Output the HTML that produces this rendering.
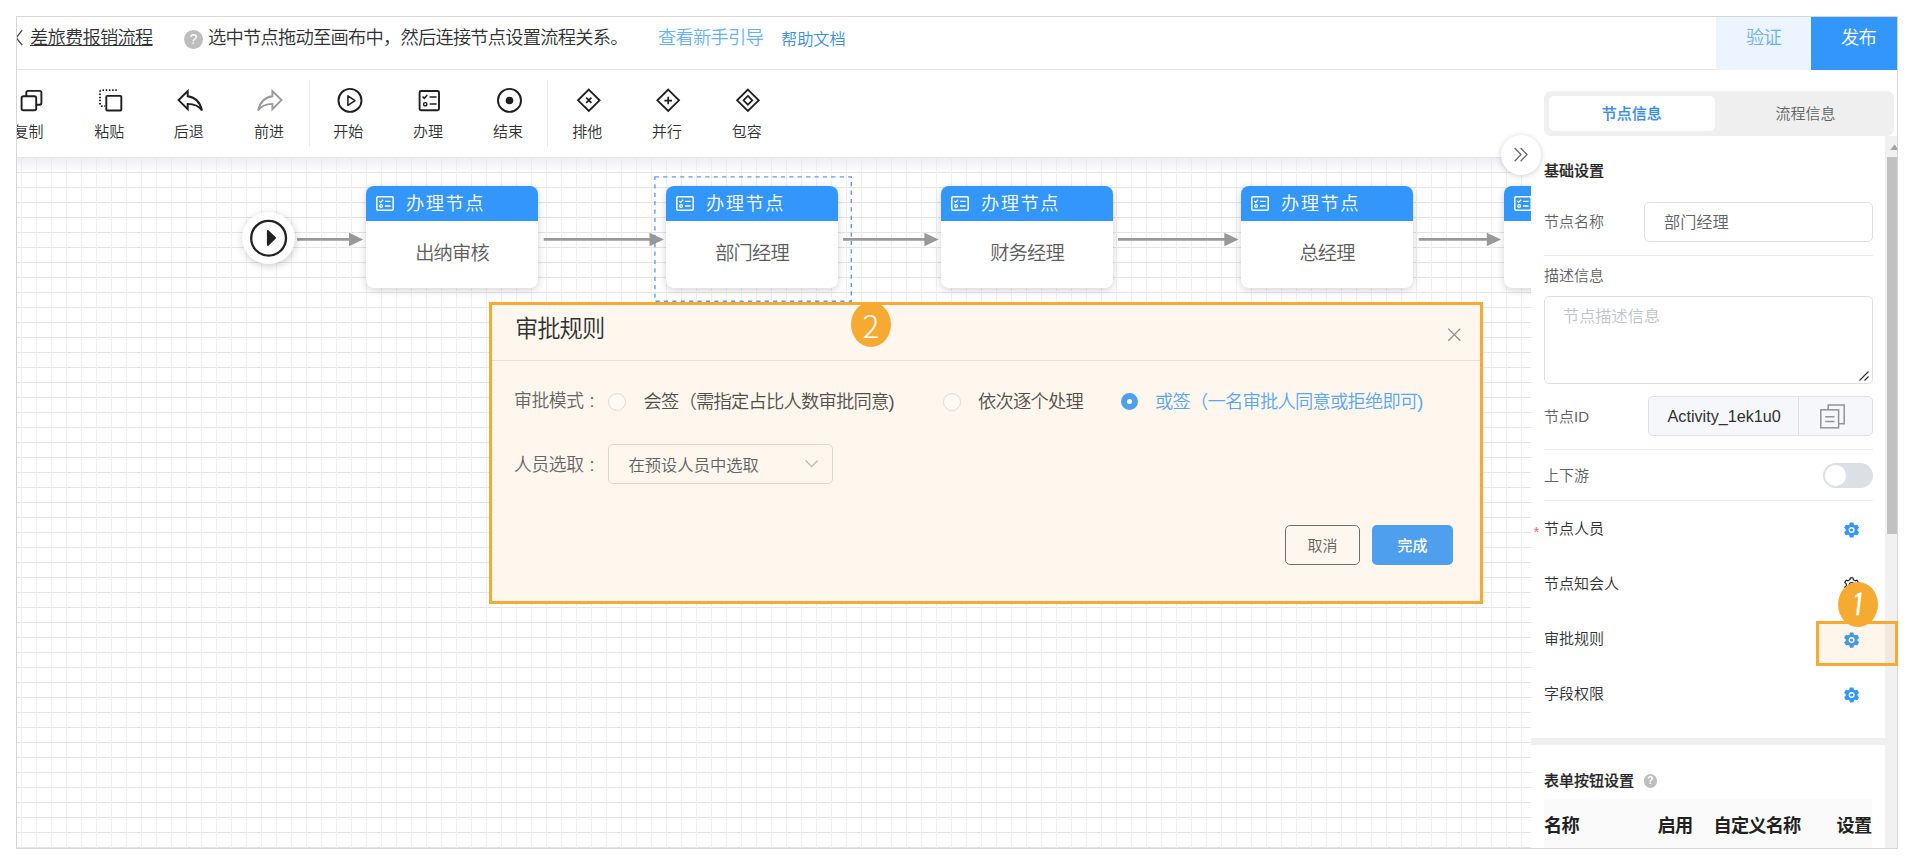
<!DOCTYPE html>
<html lang="zh-CN">
<head>
<meta charset="utf-8">
<title>差旅费报销流程</title>
<style>
*{box-sizing:border-box;margin:0;padding:0}
html,body{width:1913px;height:866px;overflow:hidden;background:#fff}
body{font-family:"Liberation Sans","Noto Sans CJK SC",sans-serif;color:#333;font-weight:350;position:relative}
.abs{position:absolute}
#frame{position:absolute;left:16px;top:16px;width:1882px;height:833px;border:1px solid #d6d6d6;overflow:hidden;background:#fff}
/* everything inside #inner is positioned in PAGE coordinates */
#inner{position:absolute;left:-17px;top:-17px;width:1913px;height:866px}
.t{position:absolute;white-space:nowrap;line-height:1}
/* header */
#hdr{left:17px;top:17px;width:1880px;height:52px;background:#fff;border-bottom:1px solid #e6e6e6;height:53px}
/* toolbar */
#tb{left:17px;top:70px;width:1514px;height:87px;background:#fff}
.tbi{position:absolute;top:70px;width:80px;height:87px;text-align:center}
.tbi svg{position:absolute;left:50%;top:18px;width:24px;height:24px;margin-left:-12px;overflow:visible}
.tbi span{position:absolute;left:0;width:100%;top:54px;font-size:15.0px;line-height:15px;color:#333}
.sep{position:absolute;top:80px;width:1px;height:67px;background:#ebebeb}
/* canvas */
#cv{left:17px;top:157px;width:1514px;height:692px;background-color:#fff;
 background-image:linear-gradient(to right,#efeff0 1px,transparent 1px),linear-gradient(to bottom,#e4e4e6 1px,transparent 1px);
 background-size:15px 15px;background-position:4px 0}
#cvsh{left:17px;top:157px;width:1514px;height:16px;background:linear-gradient(to bottom,rgba(225,225,235,.6),rgba(235,235,242,0))}
/* nodes */
.node{position:absolute;top:186px;width:172px;height:102px;border-radius:8px;background:#fff;box-shadow:0 2px 8px rgba(0,0,0,.18);overflow:hidden}
.node .nh{position:absolute;left:0;top:0;width:100%;height:35px;background:#3296fa}
.node .nh svg{position:absolute;left:10px;top:9.5px;width:18px;height:15px}
.node .nh span{position:absolute;left:40px;top:9px;font-size:18.3px;line-height:18px;color:#fff;letter-spacing:1.5px;white-space:nowrap}
.node .nb{position:absolute;left:0;top:35px;width:100%;height:67px;text-align:center;font-size:19.23px;letter-spacing:-0.83px;line-height:66px;color:#5c5c5c}
/* right panel */
#rp{left:1531px;top:70px;width:366px;height:779px;background:#fff}
.lbl{font-size:15.0px;color:#606266}
.lbl2{font-size:15.0px;color:#303133}
.hr{position:absolute;left:1544px;width:329px;height:1px;background:#ebebeb}
/* dialog */
#dlg{left:489px;top:302px;width:994px;height:302px;border:3px solid #f6aa31;background:#fff7ed}
.dl{font-size:17.8px;letter-spacing:-0.4px;line-height:22px;color:#666}
.dl .col{position:absolute;left:75.5px;top:0}
.dv{font-size:18.29px;letter-spacing:-0.79px;line-height:22px;color:#534f4b}
.rad{width:18px;height:18px;border-radius:50%;border:1px solid #dedbd8;background:#fff9f2}
.rad.on{border:6px solid #4e9fee;background:#fff;width:17.6px;height:17.6px}
.num{position:absolute;width:40px;height:45px;border-radius:50%;background:#f6aa31;color:#fff;text-align:center;font-size:31.5px;line-height:45px;font-weight:300;font-family:"Noto Sans CJK SC","Liberation Sans",sans-serif}
</style>
</head>
<body>
<div id="frame"><div id="inner">

<!-- HEADER -->
<div id="hdr" class="abs"></div>
<svg class="abs" style="left:13.4px;top:29px;width:12px;height:18px" viewBox="0 0 12 18"><path d="M9.2 1.2 L3.2 8.7 L9.2 16.2" fill="none" stroke="#444" stroke-width="1.3"/></svg>
<div class="t" style="left:30px;top:27px;font-size:18.29px;letter-spacing:-0.79px;line-height:22px;color:#303133;text-decoration:underline;text-underline-offset:1.2px;text-decoration-thickness:1.3px">差旅费报销流程</div>
<div class="abs" style="left:184px;top:29.5px;width:19px;height:19px;border-radius:50%;background:#bdbdbd;color:#fff;font-size:14.0px;line-height:19px;text-align:center;font-family:'Liberation Sans',sans-serif">?</div>
<div class="t" style="left:208px;top:27px;font-size:18.29px;letter-spacing:-0.79px;line-height:22px;color:#303133">选中节点拖动至画布中，然后连接节点设置流程关系。</div>
<div class="t" style="left:658px;top:27px;font-size:18.29px;letter-spacing:-0.79px;line-height:22px;color:#66b1ff">查看新手引导</div>
<div class="t" style="left:781px;top:28px;font-size:16.2px;line-height:22px;color:#3a8ee6">帮助文档</div>
<div class="abs" style="left:1716px;top:17px;width:95px;height:53px;background:#ecf5ff;color:#6cb0f8;font-size:18.29px;letter-spacing:-0.79px;line-height:42px;text-align:center">验证</div>
<div class="abs" style="left:1811px;top:17px;width:95px;height:53px;background:#3296fa;color:#fff;font-size:18.29px;letter-spacing:-0.79px;line-height:42px;text-align:center">发布</div>

<!-- TOOLBAR -->
<div id="tb" class="abs"></div>
<div class="t" style="left:-11.5px;top:122px;width:80px;text-align:center;font-size:15.0px;line-height:20px;color:#303133">复制</div>
<div class="t" style="left:69.3px;top:122px;width:80px;text-align:center;font-size:15.0px;line-height:20px;color:#303133">粘贴</div>
<div class="t" style="left:148.8px;top:122px;width:80px;text-align:center;font-size:15.0px;line-height:20px;color:#303133">后退</div>
<div class="t" style="left:229.0px;top:122px;width:80px;text-align:center;font-size:15.0px;line-height:20px;color:#303133">前进</div>
<div class="t" style="left:308.3px;top:122px;width:80px;text-align:center;font-size:15.0px;line-height:20px;color:#303133">开始</div>
<div class="t" style="left:388.0px;top:122px;width:80px;text-align:center;font-size:15.0px;line-height:20px;color:#303133">办理</div>
<div class="t" style="left:468.0px;top:122px;width:80px;text-align:center;font-size:15.0px;line-height:20px;color:#303133">结束</div>
<div class="t" style="left:547.2px;top:122px;width:80px;text-align:center;font-size:15.0px;line-height:20px;color:#303133">排他</div>
<div class="t" style="left:626.8px;top:122px;width:80px;text-align:center;font-size:15.0px;line-height:20px;color:#303133">并行</div>
<div class="t" style="left:706.7px;top:122px;width:80px;text-align:center;font-size:15.0px;line-height:20px;color:#303133">包容</div>
<div class="sep" style="left:309px"></div><div class="sep" style="left:547px"></div>
<svg class="abs" style="left:0;top:70px;width:800px;height:87px;overflow:visible" viewBox="0 70 800 87" fill="none" stroke="#1f1f1f" stroke-width="1.9">
<!-- copy -->
<rect x="21.6" y="96.3" width="14.6" height="14" rx="1.8"/>
<path d="M26.3 96 V92.6 a1.7 1.7 0 0 1 1.7 -1.7 H39.7 a1.7 1.7 0 0 1 1.7 1.7 V103 a1.7 1.7 0 0 1 -1.7 1.7 H36.6"/>
<!-- paste -->
<path d="M116.8 90.1 H101.6 a1.6 1.6 0 0 0 -1.6 1.6 V104.5 a1.6 1.6 0 0 0 1.6 1.6 H105" stroke-dasharray="1.5 1.7"/>
<rect x="106.3" y="95.9" width="15" height="14.6" rx="0.8"/>
<!-- undo -->
<g transform="translate(174.7 84.5) scale(1.3)" stroke-width="1.5" stroke-linejoin="miter"><path d="M10 9V5l-7 7 7 7v-4.1c5 0 8.5 1.6 11 5.1-1-5-4-10-11-11z"/></g>
<!-- redo -->
<g transform="translate(285.4 84.5) scale(-1.3 1.3)" stroke-width="1.45" stroke="#9a9a9a"><path d="M10 9V5l-7 7 7 7v-4.1c5 0 8.5 1.6 11 5.1-1-5-4-10-11-11z"/></g>
<!-- start -->
<circle cx="350" cy="100.4" r="11.5"/>
<path d="M347.9 95.8 L355 100.6 L347.9 105.4 Z" stroke-width="1.5" stroke-linejoin="round"/>
<!-- task -->
<rect x="419.6" y="91" width="19.4" height="19.2" rx="1.5"/>
<path d="M422.6 96.6 l1.7 1.7 l3 -3.2 M429.6 97 h7 M429.6 104 h7" stroke-width="1.5"/>
<circle cx="425.2" cy="104.3" r="1.7" stroke-width="1.4"/>
<!-- end -->
<circle cx="509.5" cy="100.4" r="11.5"/>
<circle cx="509.5" cy="100.5" r="3.8" fill="#1f1f1f" stroke="none"/>
<!-- exclusive -->
<path d="M588.8 89.6 L599.6 100.3 L588.8 111 L578 100.3 Z" stroke-width="1.85"/>
<path d="M586.2 97.7 l5.2 5.2 M591.4 97.7 l-5.2 5.2" stroke-width="1.75"/>
<!-- parallel -->
<path d="M668.2 89.6 L679 100.3 L668.2 111 L657.4 100.3 Z" stroke-width="1.85"/>
<path d="M664.4 100.5 h7.6 M668.2 96.7 v7.6" stroke-width="1.75"/>
<!-- inclusive -->
<path d="M747.9 89.6 L758.7 100.3 L747.9 111 L737.1 100.3 Z" stroke-width="1.85"/>
<path d="M747.9 95.9 L752.3 100.3 L747.9 104.7 L743.5 100.3 Z" stroke-width="1.7"/>
</svg>

<!-- CANVAS -->
<div id="cv" class="abs"></div>
<div id="cvsh" class="abs"></div>
<div class="abs" style="left:17px;top:157px;width:1514px;height:692px;overflow:hidden"><div class="abs" style="left:-17px;top:-157px;width:1913px;height:866px">
<svg class="abs" style="left:0;top:0;width:1913px;height:866px" viewBox="0 0 1913 866">
<path d="M297 239.4 H350.2" stroke="#999" stroke-width="2.6" fill="none"/><path d="M349.0 232.7 L363.2 239.5 L349.0 246.3 Z" fill="#999"/>
<path d="M543.7 239.4 H650.7" stroke="#999" stroke-width="2.6" fill="none"/><path d="M649.5 232.7 L663.7 239.5 L649.5 246.3 Z" fill="#999"/>
<path d="M843 239.4 H925.6" stroke="#999" stroke-width="2.6" fill="none"/><path d="M924.4 232.7 L938.6 239.5 L924.4 246.3 Z" fill="#999"/>
<path d="M1118 239.4 H1225.5" stroke="#999" stroke-width="2.6" fill="none"/><path d="M1224.3 232.7 L1238.5 239.5 L1224.3 246.3 Z" fill="#999"/>
<path d="M1418.7 239.4 H1488" stroke="#999" stroke-width="2.6" fill="none"/><path d="M1486.8 232.7 L1501 239.5 L1486.8 246.3 Z" fill="#999"/>
</svg>
<div class="abs" style="left:242.3px;top:212px;width:52.4px;height:52.4px;border-radius:50%;background:#fff;box-shadow:1px 2px 8px rgba(0,0,0,.2)"></div>
<svg class="abs" style="left:248px;top:218px;width:42px;height:42px" viewBox="248 218 42 42"><circle cx="268.6" cy="238.2" r="17.4" fill="none" stroke="#222" stroke-width="2.3"/><path d="M267.8 230.8 L275.2 237.9 L267.8 245 Z" fill="#222" stroke="#222" stroke-width="1.8" stroke-linejoin="round"/></svg>
<div class="node" style="left:366px"><div class="nh"><svg viewBox="0 0 18 15" fill="none" stroke="#fff" stroke-width="1.5"><rect x="0.8" y="0.8" width="16.4" height="13.4" rx="1.2"/><path d="M3.3 5 l1.4 1.4 l2.4 -2.6 M9 5.3 h5.6 M9 10 h5.6" stroke-width="1.3"/><circle cx="5.1" cy="10" r="1.4" stroke-width="1.2"/></svg><span>办理节点</span></div><div class="nb">出纳审核</div></div>
<div class="node" style="left:666px"><div class="nh"><svg viewBox="0 0 18 15" fill="none" stroke="#fff" stroke-width="1.5"><rect x="0.8" y="0.8" width="16.4" height="13.4" rx="1.2"/><path d="M3.3 5 l1.4 1.4 l2.4 -2.6 M9 5.3 h5.6 M9 10 h5.6" stroke-width="1.3"/><circle cx="5.1" cy="10" r="1.4" stroke-width="1.2"/></svg><span>办理节点</span></div><div class="nb">部门经理</div></div>
<div class="node" style="left:941px"><div class="nh"><svg viewBox="0 0 18 15" fill="none" stroke="#fff" stroke-width="1.5"><rect x="0.8" y="0.8" width="16.4" height="13.4" rx="1.2"/><path d="M3.3 5 l1.4 1.4 l2.4 -2.6 M9 5.3 h5.6 M9 10 h5.6" stroke-width="1.3"/><circle cx="5.1" cy="10" r="1.4" stroke-width="1.2"/></svg><span>办理节点</span></div><div class="nb">财务经理</div></div>
<div class="node" style="left:1241px"><div class="nh"><svg viewBox="0 0 18 15" fill="none" stroke="#fff" stroke-width="1.5"><rect x="0.8" y="0.8" width="16.4" height="13.4" rx="1.2"/><path d="M3.3 5 l1.4 1.4 l2.4 -2.6 M9 5.3 h5.6 M9 10 h5.6" stroke-width="1.3"/><circle cx="5.1" cy="10" r="1.4" stroke-width="1.2"/></svg><span>办理节点</span></div><div class="nb">总经理</div></div>
<div class="node" style="left:1503.5px"><div class="nh"><svg viewBox="0 0 18 15" fill="none" stroke="#fff" stroke-width="1.5"><rect x="0.8" y="0.8" width="16.4" height="13.4" rx="1.2"/><path d="M3.3 5 l1.4 1.4 l2.4 -2.6 M9 5.3 h5.6 M9 10 h5.6" stroke-width="1.3"/><circle cx="5.1" cy="10" r="1.4" stroke-width="1.2"/></svg><span>办理节点</span></div><div class="nb">董事长</div></div>
<svg class="abs" style="left:650px;top:172px;width:210px;height:135px" viewBox="650 172 210 135"><rect x="654.9" y="176.9" width="196.4" height="124.4" fill="none" stroke="#5b9cf7" stroke-width="1.4" stroke-dasharray="4.2 4.2"/></svg>
</div></div>

<!-- RIGHT PANEL -->
<div id="rp" class="abs"></div>
<div class="abs" style="left:1544px;top:91px;width:350px;height:45px;border-radius:7px;background:#efefef"></div>
<div class="abs" style="left:1548.5px;top:96px;width:166.5px;height:35px;border-radius:5px;background:#fff"></div>
<div class="t" style="left:1548.5px;top:104px;width:166.5px;text-align:center;font-size:15.0px;line-height:20px;color:#3a8ee6;font-weight:500;-webkit-text-stroke:0.2px #3a8ee6">节点信息</div>
<div class="t" style="left:1722px;top:104px;width:167px;text-align:center;font-size:15.0px;line-height:20px;color:#606266">流程信息</div>
<div class="abs" style="left:1885px;top:136px;width:12px;height:713px;background:#f1f1f1"></div>
<div class="abs" style="left:1887px;top:157px;width:10px;height:377px;background:#c1c1c1"></div>
<svg class="abs" style="left:1885px;top:141px;width:12px;height:12px" viewBox="0 0 12 12"><path d="M5.2 9 L9.6 3.6 L14 9 Z" fill="#a3a3a3"/></svg>
<div class="t" style="left:1544px;top:161px;font-size:15.0px;line-height:20px;color:#262626;font-weight:500;-webkit-text-stroke:0.2px #262626">基础设置</div>
<div class="t lbl" style="left:1544px;top:212px;line-height:20px">节点名称</div>
<div class="abs" style="left:1644px;top:202px;width:229px;height:40px;border:1px solid #dcdfe6;border-radius:5px;background:#fff"></div>
<div class="t" style="left:1664px;top:212px;font-size:16.2px;line-height:20px;color:#606266">部门经理</div>
<div class="hr" style="top:255px"></div>
<div class="t lbl" style="left:1544px;top:266px;line-height:20px">描述信息</div>
<div class="abs" style="left:1544px;top:296px;width:329px;height:88px;border:1px solid #dcdfe6;border-radius:5px;background:#fff"></div>
<div class="t" style="left:1563px;top:306px;font-size:16.2px;line-height:20px;color:#c0c4cc">节点描述信息</div>
<svg class="abs" style="left:1857px;top:369px;width:14px;height:14px" viewBox="0 0 14 14" stroke="#333" stroke-width="1.2" fill="none"><path d="M2.5 11.5 L11.5 2.5 M7.5 11.5 L11.5 7.5"/></svg>
<div class="t lbl" style="left:1544px;top:407px;line-height:20px">节点ID</div>
<div class="abs" style="left:1648px;top:396px;width:225px;height:40px;border:1px solid #dcdfe6;border-radius:5px;background:#f5f7fa"></div>
<div class="abs" style="left:1798px;top:397px;width:1px;height:38px;background:#dcdfe6"></div>
<div class="t" style="left:1667.5px;top:406px;font-size:16.2px;line-height:20px;color:#303133">Activity_1ek1u0</div>
<svg class="abs" style="left:1816px;top:400px;width:34px;height:34px" viewBox="1816 400 34 34" fill="none" stroke="#909399" stroke-width="1.5"><rect x="1820.8" y="409.8" width="17.8" height="18"/><path d="M1828.2 409.5 V404.9 H1844.2 V423.8 H1839"/><path d="M1825.2 416.7 h9.3 M1825.2 421.4 h9.3"/></svg>
<div class="hr" style="top:449px"></div>
<div class="t lbl" style="left:1544px;top:466px;line-height:20px">上下游</div>
<div class="abs" style="left:1823px;top:463px;width:50px;height:25px;border-radius:13px;background:#dcdfe6"></div>
<div class="abs" style="left:1825px;top:465px;width:20.5px;height:20.5px;border-radius:50%;background:#fff"></div>
<div class="hr" style="top:500px"></div>
<div class="t" style="left:1533.5px;top:522px;font-size:15.0px;line-height:20px;color:#f56c6c">*</div>
<div class="t lbl2" style="left:1544px;top:519px;line-height:20px">节点人员</div>
<div class="t lbl2" style="left:1544px;top:574px;line-height:20px">节点知会人</div>
<div class="t lbl2" style="left:1544px;top:629px;line-height:20px">审批规则</div>
<div class="t lbl2" style="left:1544px;top:684px;line-height:20px">字段权限</div>
<svg class="abs" style="left:1836px;top:515px;width:30px;height:200px" viewBox="1836 515 30 200"><path d="M1853.36 524.89 L1852.97 522.93 L1850.23 522.93 L1849.84 524.89 L1848.06 525.92 L1846.17 525.28 L1844.79 527.66 L1846.30 528.97 L1846.30 531.03 L1844.79 532.34 L1846.17 534.72 L1848.06 534.08 L1849.84 535.11 L1850.23 537.07 L1852.97 537.07 L1853.36 535.11 L1855.14 534.08 L1857.03 534.72 L1858.41 532.34 L1856.90 531.03 L1856.90 528.97 L1858.41 527.66 L1857.03 525.28 L1855.14 525.92 Z" fill="#3296fa" stroke="#3296fa" stroke-width="1.1" stroke-linejoin="round"/><circle cx="1851.6" cy="530" r="3" fill="#fff"/><circle cx="1851.6" cy="530" r="1.6" fill="#3296fa"/><path d="M1853.36 579.79 L1852.97 577.83 L1850.23 577.83 L1849.84 579.79 L1848.06 580.82 L1846.17 580.18 L1844.79 582.56 L1846.30 583.87 L1846.30 585.93 L1844.79 587.24 L1846.17 589.62 L1848.06 588.98 L1849.84 590.01 L1850.23 591.97 L1852.97 591.97 L1853.36 590.01 L1855.14 588.98 L1857.03 589.62 L1858.41 587.24 L1856.90 585.93 L1856.90 583.87 L1858.41 582.56 L1857.03 580.18 L1855.14 580.82 Z" fill="none" stroke="#222" stroke-width="1.2" stroke-linejoin="round"/><circle cx="1851.6" cy="584.9" r="2.4" fill="none" stroke="#222" stroke-width="1.2"/><path d="M1853.36 689.89 L1852.97 687.93 L1850.23 687.93 L1849.84 689.89 L1848.06 690.92 L1846.17 690.28 L1844.79 692.66 L1846.30 693.97 L1846.30 696.03 L1844.79 697.34 L1846.17 699.72 L1848.06 699.08 L1849.84 700.11 L1850.23 702.07 L1852.97 702.07 L1853.36 700.11 L1855.14 699.08 L1857.03 699.72 L1858.41 697.34 L1856.90 696.03 L1856.90 693.97 L1858.41 692.66 L1857.03 690.28 L1855.14 690.92 Z" fill="#3296fa" stroke="#3296fa" stroke-width="1.1" stroke-linejoin="round"/><circle cx="1851.6" cy="695" r="3" fill="#fff"/><circle cx="1851.6" cy="695" r="1.6" fill="#3296fa"/></svg>
<svg class="abs" style="left:1836px;top:625px;width:30px;height:30px" viewBox="1836 625 30 30"><path d="M1853.36 634.99 L1852.97 633.03 L1850.23 633.03 L1849.84 634.99 L1848.06 636.02 L1846.17 635.38 L1844.79 637.76 L1846.30 639.07 L1846.30 641.13 L1844.79 642.44 L1846.17 644.82 L1848.06 644.18 L1849.84 645.21 L1850.23 647.17 L1852.97 647.17 L1853.36 645.21 L1855.14 644.18 L1857.03 644.82 L1858.41 642.44 L1856.90 641.13 L1856.90 639.07 L1858.41 637.76 L1857.03 635.38 L1855.14 636.02 Z" fill="#3296fa" stroke="#3296fa" stroke-width="1.1" stroke-linejoin="round"/><circle cx="1851.6" cy="640.1" r="3" fill="#fff"/><circle cx="1851.6" cy="640.1" r="1.6" fill="#3296fa"/></svg>
<div class="num" style="left:1838px;top:581.7px"><span style="display:inline-block;font-family:IPAGothic,'Liberation Sans',sans-serif;font-weight:400;font-size:32.5px;transform:skewX(-7deg) translate(0.3px,-0.8px)">1</span></div>
<div class="abs" style="left:1531px;top:738px;width:354px;height:7px;background:#efefef"></div>
<div class="t" style="left:1544px;top:771px;font-size:15.0px;line-height:20px;color:#262626;font-weight:500;-webkit-text-stroke:0.2px #262626">表单按钮设置</div>
<div class="abs" style="left:1643.5px;top:774px;width:13.5px;height:13.5px;border-radius:50%;background:#bdbdbd;color:#fff;font-size:10.0px;line-height:13.5px;text-align:center;font-family:'Liberation Sans',sans-serif;font-weight:bold">?</div>
<div class="abs" style="left:1544px;top:799px;width:328px;height:50px;background:#fafafa"></div>
<div class="t" style="left:1544px;top:814px;font-size:18.18px;letter-spacing:-0.78px;line-height:24px;color:#222;font-weight:bold">名称</div>
<div class="t" style="left:1657.5px;top:814px;font-size:18.18px;letter-spacing:-0.78px;line-height:24px;color:#222;font-weight:bold">启用</div>
<div class="t" style="left:1713.5px;top:814px;font-size:18.18px;letter-spacing:-0.78px;line-height:24px;color:#222;font-weight:bold">自定义名称</div>
<div class="t" style="left:1836.5px;top:814px;font-size:18.18px;letter-spacing:-0.78px;line-height:24px;color:#222;font-weight:bold">设置</div>
<div class="abs" style="left:1500.8px;top:134.6px;width:40px;height:40px;border-radius:50%;background:#fff;box-shadow:0 1px 6px rgba(0,0,0,.18)"></div>
<svg class="abs" style="left:1511px;top:145px;width:20px;height:20px" viewBox="0 0 20 20" fill="none" stroke="#666" stroke-width="1.3"><path d="M3.6 3 L10 9.6 L3.6 16.2 M9.6 3 L16 9.6 L9.6 16.2"/></svg>

<!-- DIALOG -->
<div id="dlg" class="abs"></div>
<div class="t" style="left:515px;top:315px;font-size:23.30px;letter-spacing:-1.00px;line-height:28px;color:#303133">审批规则</div>
<svg class="abs" style="left:1446px;top:326px;width:17px;height:17px" viewBox="0 0 17 17" fill="none" stroke="#8c8c8c" stroke-width="1.3"><path d="M2.3 2.6 L14.3 14.8 M14.3 2.6 L2.3 14.8"/></svg>
<div class="abs" style="left:492px;top:360px;width:988px;height:1px;background:#e3dfd9"></div>
<div class="t dl" style="left:514px;top:389.5px">审批模式<span class="col">:</span></div>
<div class="abs rad" style="left:608px;top:392.5px"></div>
<div class="t dv" style="left:643.5px;top:390.5px">会签（需指定占比人数审批同意)</div>
<div class="abs rad" style="left:943px;top:392.5px"></div>
<div class="t dv" style="left:978px;top:390.5px">依次逐个处理</div>
<div class="abs rad on" style="left:1120.5px;top:392.5px"></div>
<div class="t dv" style="left:1155px;top:390.5px;color:#5aa6f2">或签（一名审批人同意或拒绝即可)</div>
<div class="t dl" style="left:514px;top:453.5px">人员选取<span class="col">:</span></div>
<div class="abs" style="left:608px;top:444px;width:225px;height:40px;border:1px solid #dcd9d5;border-radius:5px"></div>
<div class="t" style="left:628.5px;top:454.5px;font-size:16.3px;line-height:20px;color:#606266">在预设人员中选取</div>
<svg class="abs" style="left:804.3px;top:458px;width:16px;height:12px" viewBox="0 0 16 12" fill="none" stroke="#bcb9b5" stroke-width="1.3"><path d="M1.7 2.5 L7.7 8.6 L13.7 2.5"/></svg>
<div class="abs" style="left:1285px;top:525px;width:75px;height:40px;border:1px solid #6f6f6f;border-radius:5px;color:#606266;font-size:15.0px;line-height:40px;text-align:center">取消</div>
<div class="abs" style="left:1372px;top:525px;width:81px;height:40px;border-radius:5px;background:#4e9fee;color:#fff;font-size:15.0px;line-height:42px;text-align:center;font-weight:500">完成</div>
<div class="num" style="left:851px;top:302px">2</div>

</div></div>
<div class="abs" style="left:1816px;top:621px;width:82px;height:45px;border:3px solid #f6aa31;background:rgba(246,170,49,.1)"></div>
</body>
</html>
